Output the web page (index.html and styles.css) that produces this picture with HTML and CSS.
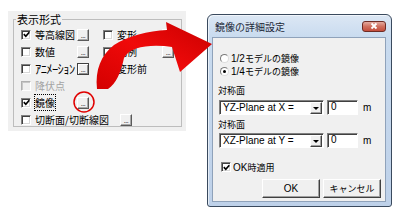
FILE: index.html
```html
<!DOCTYPE html>
<html lang="ja">
<head>
<meta charset="utf-8">
<link rel="stylesheet" href="styles.css">
</head>
<body>
<div class="page">
  <div class="panel">
    <fieldset class="group">
      <legend class="legend">表示形式</legend>
      <div class="grid">
        <div class="cell"><span class="cb"><svg class="tick" viewBox="0 0 7 7"><polyline points="0.8,3.2 2.8,5.3 6.3,1.2"/></svg></span><span class="lbl w42">等高線図</span><span class="btn">...</span></div>
        <div class="cell"><span class="cb"></span><span class="lbl w45">変形</span><span class="btn">...</span></div>
        <div class="cell"><span class="cb"></span><span class="lbl w42">数値</span><span class="btn">...</span></div>
        <div class="cell"><span class="cb"></span><span class="lbl w45">凡例</span><span class="btn">...</span></div>
        <div class="cell"><span class="cb"></span><span class="lbl w42 hw">ｱﾆﾒｰｼｮﾝ</span><span class="btn def">...</span></div>
        <div class="cell"><span class="cb"></span><span class="lbl">変形前</span></div>
        <div class="cell wide"><span class="cb dis"></span><span class="lbl dis">降伏点</span></div>
        <div class="cell wide"><span class="cb"><svg class="tick" viewBox="0 0 7 7"><polyline points="0.8,3.2 2.8,5.3 6.3,1.2"/></svg></span><span class="lbl w42"><span class="focus">鏡像</span></span><span class="btn">...</span></div>
        <div class="cell wide"><span class="cb"></span><span class="lbl w85">切断面/切断線図</span><span class="btn">...</span></div>
      </div>
    </fieldset>
  </div>

  <div class="dialog">
    <div class="title">
      <span class="title-text">鏡像の詳細設定</span>
      <span class="close"><svg viewBox="0 0 10 8" class="x"><path d="M2.5 1.5 L7.5 6.5 M7.5 1.5 L2.5 6.5"/></svg></span>
    </div>
    <div class="client">
      <div class="radio-row"><span class="radio"></span><span class="rlbl"><span class="lat">1/2</span>モデルの鏡像</span></div>
      <div class="radio-row"><span class="radio on"></span><span class="rlbl"><span class="lat">1/4</span>モデルの鏡像</span></div>
      <div class="flabel">対称面</div>
      <div class="field-row">
        <div class="combo"><span class="combo-text">YZ-Plane at X =</span><span class="dd"><span class="tri"></span></span></div>
        <div class="input">0</div>
        <span class="unit">m</span>
      </div>
      <div class="flabel second">対称面</div>
      <div class="field-row tight">
        <div class="combo"><span class="combo-text">XZ-Plane at Y =</span><span class="dd"><span class="tri"></span></span></div>
        <div class="input">0</div>
        <span class="unit">m</span>
      </div>
      <div class="check-row"><span class="cb"><svg class="tick" viewBox="0 0 7 7"><polyline points="0.8,3.2 2.8,5.3 6.3,1.2"/></svg></span><span class="clbl"><span class="lat">OK</span>時適用</span></div>
      <div class="buttons">
        <span class="pbtn lat">OK</span>
        <span class="pbtn">キャンセル</span>
      </div>
    </div>
  </div>

  <svg class="arrow" viewBox="0 0 406 220" width="406" height="220">
    <defs>
      <linearGradient id="rg" x1="0" y1="1" x2="1" y2="0">
        <stop offset="0" stop-color="#d40000"/>
        <stop offset="0.5" stop-color="#f00a0a"/>
        <stop offset="1" stop-color="#c80000"/>
      </linearGradient>
    </defs>
    <path fill="url(#rg)" d="M97 89 C95 70 101 55 114 45 C128 36 148 31 167 30 L166 22 L212 44 L180 72 L172 47 C152 44 130 46 124 58 C121 72 116 84 108 89 Z"/>
    <circle cx="84" cy="102" r="10" fill="none" stroke="#e00000" stroke-width="1.5"/>
  </svg>
</div>
</body>
</html>
```
FILE: styles.css
```css
* { box-sizing: border-box; }
body {
  margin: 0;
  background: #fff;
  font-family: "Noto Sans CJK JP", sans-serif;
  color: #000;
}
.page {
  position: relative;
  width: 406px;
  height: 220px;
  display: flex;
  align-items: flex-start;
  gap: 21px;
  padding: 11px 0 0 8px;
}
.panel {
  width: 178px;
  height: 120px;
  background: #f0f0f0;
  padding: 1px 4px 0 5px;
}
.group {
  margin: 0;
  padding: 0;
  width: 169px;
  height: 115px;
  border: 1px solid #bdbdbd;
  min-width: 0;
}
.legend {
  font-size: 11px;
  line-height: 14px;
  padding: 0 1px;
  margin-left: 2px;
}
.grid {
  margin-left: 7px;
  display: grid;
  grid-template-columns: 82px 1fr;
  grid-auto-rows: 17px;
}
.cell {
  display: flex;
  align-items: center;
}
.wide { grid-column: 1 / -1; }
.cb {
  width: 10px;
  height: 10px;
  flex: none;
  background: #fff;
  border: 1px solid;
  border-color: #808080 #fff #fff #808080;
  box-shadow: inset 1px 1px 0 #404040, inset -1px -1px 0 #d8d8d8;
  display: flex;
  align-items: center;
  justify-content: center;
}
.cb.dis { background: #f0f0f0; border-color: #b0b0b0 #fff #fff #b0b0b0; box-shadow: inset 1px 1px 0 #c8c8c8; }
.tick {
  width: 7px;
  height: 7px;
  fill: none;
  stroke: #000;
  stroke-width: 1.7;
}
.lbl {
  margin-left: 4px;
  font-size: 10px;
  line-height: 17px;
  white-space: nowrap;
}
.lbl.hw { font-size: 12.5px; letter-spacing: -0.6px; overflow: hidden; }
.lbl.dis { color: #a3a3a3; }
.w42 { width: 42px; }
.w45 { width: 45px; }
.w85 { width: 85px; }
.focus { outline: 1px dotted #000; }
.btn {
  width: 12px;
  height: 12px;
  flex: none;
  background: #f0f0f0;
  border: 1px solid;
  border-color: #fff #5a5a5a #5a5a5a #fff;
  box-shadow: inset -1px -1px 0 #a8a8a8;
  display: flex;
  align-items: flex-end;
  justify-content: center;
  font-family: "Liberation Sans", sans-serif;
  font-size: 7px;
  line-height: 8px;
  letter-spacing: -0.5px;
  color: #000;
  overflow: hidden;
}
.btn.def {
  border-color: #404040;
  box-shadow: inset 1px 1px 0 #fff, inset -1px -1px 0 #909090;
}

/* dialog */
.dialog {
  width: 185px;
  height: 193px;
  margin-top: 3px;
  border: 1px solid #3a4a5e;
  border-radius: 6px 6px 3px 3px;
  background: linear-gradient(#dce7f4, #c9dbef 22px, #bed1e9);
  padding: 0 5px 4px 4px;
  display: flex;
  flex-direction: column;
  box-shadow: inset 1px 1px 0 rgba(255,255,255,0.6);
}
.title {
  height: 22px;
  flex: none;
  display: flex;
  align-items: center;
  justify-content: space-between;
  padding-left: 3px;
}
.title-text {
  font-size: 10px;
  color: #1c2838;
}
.close {
  width: 24px;
  height: 11px;
  border: 1px solid #6e2b24;
  border-radius: 3px;
  background: linear-gradient(#e4aa9f, #d0705f 50%, #c44d3c);
  display: flex;
  align-items: center;
  justify-content: center;
}
.x {
  width: 10px;
  height: 8px;
  stroke: #fff;
  stroke-width: 1.8;
  fill: none;
}
.client {
  flex: 1;
  background: #f0f0f0;
  border: 1px solid #8fa2ba;
  padding: 14px 4px 0 6px;
  display: flex;
  flex-direction: column;
  font-size: 9px;
  font-family: "Liberation Sans", "Noto Sans CJK JP", sans-serif;
}
.lat { font-size: 10px; }
.radio-row {
  height: 13px;
  display: flex;
  align-items: center;
  margin-left: 1px;
}
.radio {
  width: 9px;
  height: 9px;
  border-radius: 50%;
  background: #fff;
  border: 1px solid;
  border-color: #7a7a7a #dcdcdc #dcdcdc #7a7a7a;
  display: flex;
  align-items: center;
  justify-content: center;
}
.radio.on::after {
  content: "";
  width: 3px;
  height: 3px;
  border-radius: 50%;
  background: #000;
}
.rlbl { margin-left: 2px; line-height: 13px; white-space: nowrap; }
.flabel {
  height: 14px;
  line-height: 14px;
  margin-top: 6px;
  margin-left: -1px;
}
.flabel.second { margin-top: 3px; }
.field-row {
  height: 15px;
  margin-top: 2px;
  display: flex;
  align-items: center;
}
.field-row.tight { margin-top: 1px; }
.combo {
  width: 105px;
  height: 15px;
  display: flex;
  align-items: center;
  background: #fff;
  border: 1px solid;
  border-color: #808080 #fff #fff #808080;
  box-shadow: inset 1px 1px 0 #404040;
  padding: 1px 1px 0 1px;
}
.combo-text {
  flex: 1;
  font-size: 10px;
  line-height: 12px;
  padding-left: 2px;
  white-space: nowrap;
}
.dd {
  width: 12px;
  height: 12px;
  background: #f0f0f0;
  border: 1px solid;
  border-color: #fff #404040 #404040 #fff;
  box-shadow: inset -1px -1px 0 #a0a0a0;
  display: flex;
  align-items: center;
  justify-content: center;
}
.tri {
  width: 0;
  height: 0;
  border-left: 3px solid transparent;
  border-right: 3px solid transparent;
  border-top: 3px solid #000;
}
.input {
  width: 31px;
  height: 15px;
  margin-left: 3px;
  background: #fff;
  border: 1px solid;
  border-color: #808080 #fff #fff #808080;
  box-shadow: inset 1px 1px 0 #404040;
  font-size: 10px;
  line-height: 12px;
  padding-left: 3px;
}
.unit {
  margin-left: 5px;
  font-size: 10px;
}
.check-row {
  height: 14px;
  margin-top: 12px;
  margin-left: 2px;
  display: flex;
  align-items: center;
}
.clbl { margin-left: 2px; white-space: nowrap; }
.buttons {
  height: 19px;
  margin-top: 5px;
  display: flex;
  justify-content: flex-end;
  gap: 3px;
}
.pbtn {
  width: 58px;
  height: 19px;
  background: #f0f0f0;
  border: 1px solid;
  border-color: #fff #404040 #404040 #fff;
  box-shadow: inset -1px -1px 0 #a0a0a0;
  display: flex;
  align-items: center;
  justify-content: center;
  font-size: 9px;
}
.pbtn.lat { font-size: 10px; }

.arrow {
  position: absolute;
  left: 0;
  top: 0;
  pointer-events: none;
}
```
